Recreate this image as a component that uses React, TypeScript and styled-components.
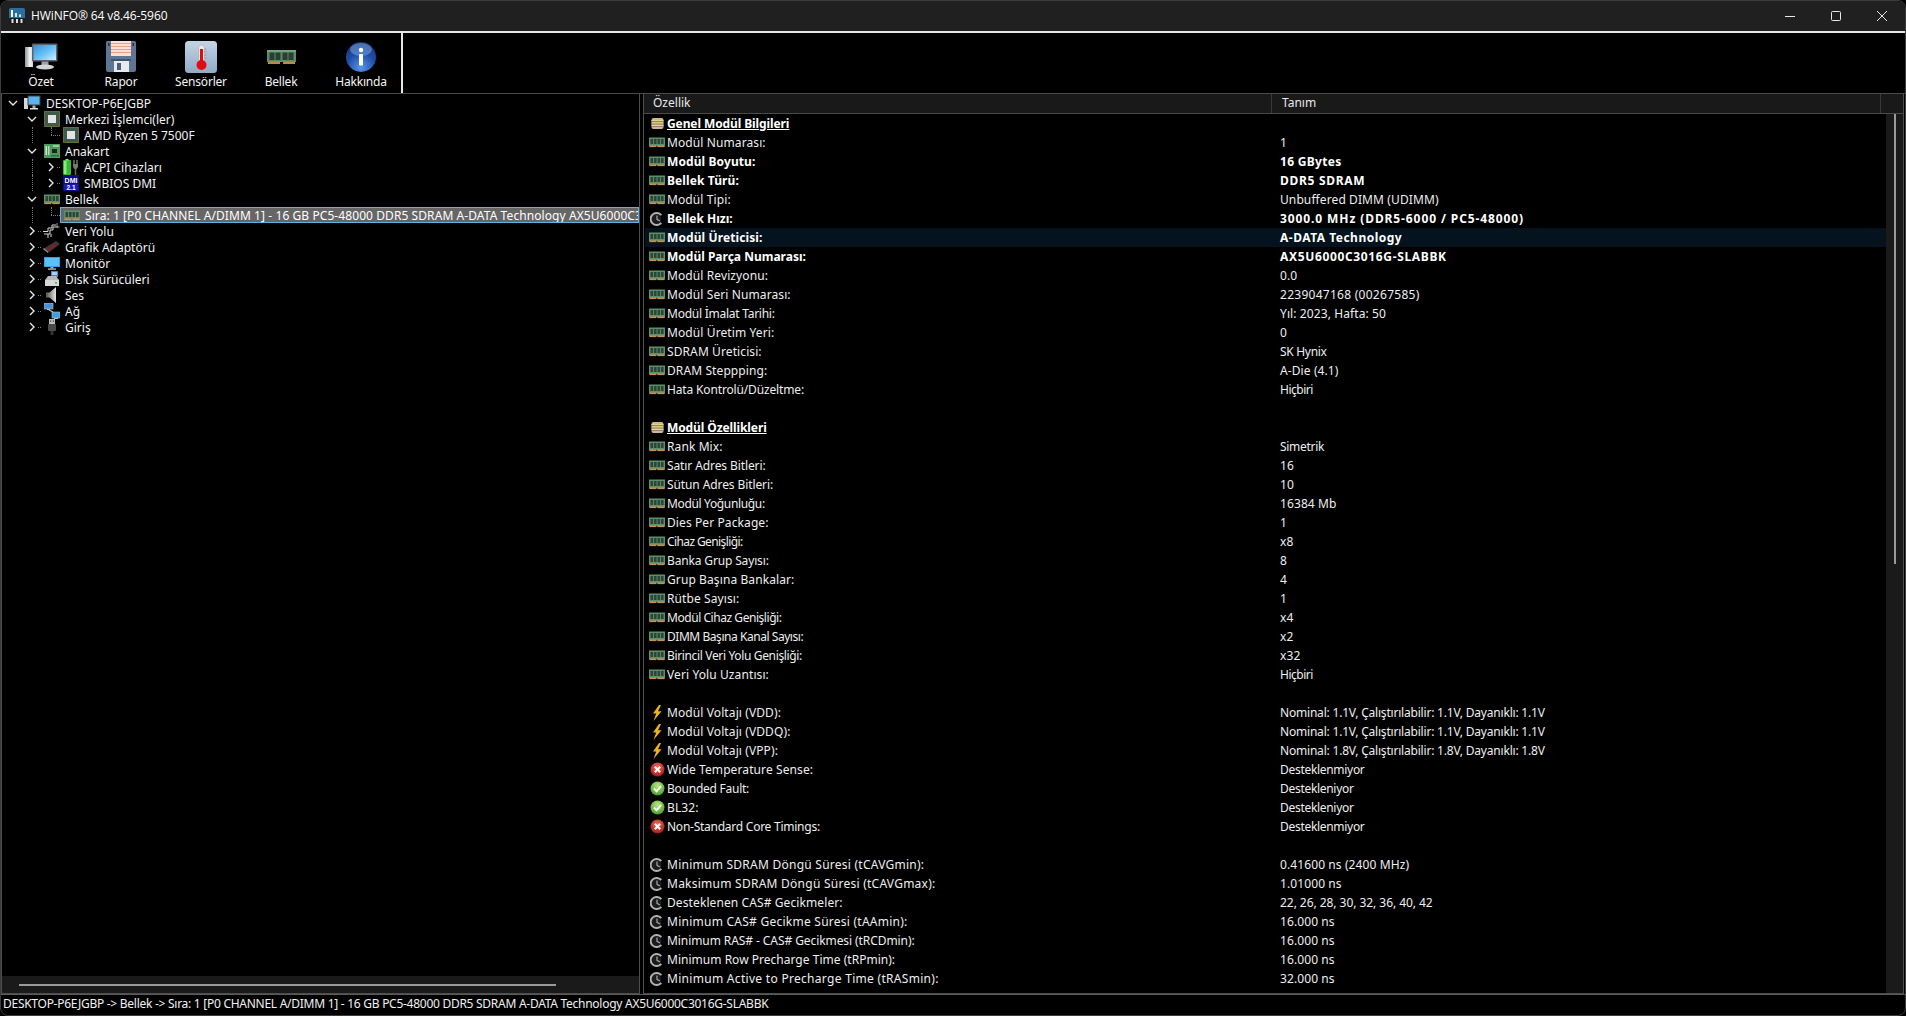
import styled, { createGlobalStyle } from "styled-components";

const GlobalStyle = createGlobalStyle`
  html, body {
    margin: 0;
    padding: 0;
    background: #000;
  }
  * {
    box-sizing: border-box;
  }
`;

const Win = styled.div`
  width: 100vw;
  height: 100vh;
  display: flex;
  flex-direction: column;
  background: #000;
  border: 1px solid #3c3c3c;
  border-radius: 8px;
  overflow: hidden;
  color: #f2f2f2;
  font-family: "Noto Sans", "Liberation Sans", sans-serif;
  font-size: 12px;
  line-height: 16px;
`;

const TitleBar = styled.div`
  height: 32px;
  flex: none;
  display: flex;
  align-items: center;
  background: #202020;
  border-bottom: 2px solid #e6e6e6;
  padding-left: 8px;
`;

const TitleText = styled.span`
  margin-left: 6px;
  flex: 1;
  font-family: "Open Sans", "Noto Sans", sans-serif;
  font-size: 12px;
  letter-spacing: -0.1px;
  color: #fff;
`;

const WinButton = styled.div`
  width: 46px;
  height: 30px;
  display: flex;
  align-items: center;
  justify-content: center;
`;

const Toolbar = styled.div`
  height: 61px;
  flex: none;
  display: flex;
  border-bottom: 1px solid #4a4a4a;
`;

const ToolGroup = styled.div`
  width: 402px;
  display: flex;
  border-right: 2px solid #e6e6e6;
`;

const ToolButton = styled.div`
  width: 80px;
  display: flex;
  flex-direction: column;
  align-items: center;
  padding-top: 7px;
`;

const ToolIcon = styled.div`
  height: 33px;
  display: flex;
  align-items: center;
`;

const ToolLabel = styled.span`
  margin-top: 1px;
  font-size: 12px;
  letter-spacing: -0.2px;
  color: #f4f4f4;
`;

const Main = styled.div`
  flex: 1;
  min-height: 0;
  display: flex;
  gap: 3px;
`;

const TreePanel = styled.div`
  width: 639px;
  flex: none;
  display: flex;
  flex-direction: column;
  border: 1px solid #4e4e4e;
  border-top: none;
`;

const TreeBody = styled.div`
  flex: 1;
  padding: 1px 0 0 1px;
  overflow: hidden;
`;

const TreeRow = styled.div`
  height: 16px;
  display: flex;
  align-items: center;
  white-space: nowrap;
`;

const Cell = styled.div<{ $line?: boolean; $elbow?: boolean; $stub?: boolean }>`
  position: relative;
  width: 19px;
  height: 16px;
  flex: none;
  display: flex;
  align-items: center;
  justify-content: center;

  &::before {
    content: ${({ $line, $elbow }) => ($line || $elbow ? '""' : "none")};
    position: absolute;
    left: 10px;
    top: 0;
    height: ${({ $elbow }) => ($elbow ? "8px" : "16px")};
    border-left: 1px dotted #7a7a7a;
  }

  &::after {
    content: ${({ $elbow, $stub }) => ($elbow || $stub ? '""' : "none")};
    position: absolute;
    left: ${({ $stub }) => ($stub ? "16px" : "10px")};
    top: 8px;
    width: ${({ $stub }) => ($stub ? "3px" : "9px")};
    border-top: 1px dotted #7a7a7a;
  }
`;

const IconSlot = styled.div`
  width: 19px;
  height: 16px;
  flex: none;
  display: flex;
  align-items: center;
  justify-content: flex-end;
`;

const TreeLabel = styled.span`
  margin-left: 5px;
  padding-top: 1px;
`;

const Selected = styled.div`
  flex: 1;
  min-width: 0;
  height: 16px;
  display: flex;
  align-items: center;
  overflow: hidden;
  background: #666;
  border: 1px solid #5cb2e6;
`;

const SelectedLabel = styled.span`
  margin-left: 5px;
  padding-top: 1px;
  letter-spacing: 0.08px;
  color: #fff;
`;

const HScroll = styled.div`
  height: 17px;
  flex: none;
  display: flex;
  align-items: center;
  padding-left: 17px;
  background: #1a1a1a;
`;

const HThumb = styled.div`
  width: 537px;
  height: 2px;
  background: #9a9a9a;
`;

const DetailPanel = styled.div`
  flex: 1;
  min-width: 0;
  margin-right: 1px;
  display: flex;
  flex-direction: column;
  border: 1px solid #4e4e4e;
  border-top: none;
`;

const Header = styled.div`
  height: 20px;
  flex: none;
  display: flex;
  background: #191919;
  border-bottom: 1px solid #4a4a4a;
`;

const HeaderCell = styled.div<{ $w: number }>`
  width: ${({ $w }) => $w}px;
  flex: none;
  padding-left: ${({ $w }) => ($w > 620 ? 9 : 10)}px;
  border-right: 1px solid #3a3a3a;
  color: #e8e8e8;
  line-height: 18px;
`;

const DetailBody = styled.div`
  flex: 1;
  min-height: 0;
  display: flex;
`;

const Rows = styled.div`
  flex: 1;
  min-width: 0;
  overflow: hidden;
`;

const VScroll = styled.div`
  width: 17px;
  flex: none;
  display: flex;
  justify-content: center;
  background: #1a1a1a;
`;

const VThumb = styled.div`
  width: 2px;
  height: 450px;
  background: #9a9a9a;
`;

const Row = styled.div<{ $hl?: boolean; $bold?: boolean }>`
  height: 19px;
  margin-left: 1px;
  display: grid;
  grid-template-columns: 627px 1fr;
  align-items: center;
  white-space: nowrap;
  background: ${({ $hl }) => ($hl ? "#04131d" : "transparent")};
  font-weight: ${({ $bold }) => ($bold ? 700 : 400)};
  color: ${({ $bold }) => ($bold ? "#fff" : "#eeeeee")};
`;

const NameCell = styled.div<{ $track?: number }>`
  display: flex;
  align-items: center;
  padding-left: 4px;
  letter-spacing: ${({ $track }) => $track ?? 0.1}px;
`;

const RowIcon = styled.div`
  width: 16px;
  height: 16px;
  flex: none;
  display: flex;
  align-items: center;
  justify-content: center;
  margin-right: 2px;
`;

const SectionTitle = styled.span`
  font-weight: 700;
  color: #fff;
  letter-spacing: -0.1px;
  text-decoration: underline;
`;

const ValueCell = styled.div<{ $track?: number }>`
  padding-left: 8px;
  letter-spacing: ${({ $track }) => $track ?? 0.1}px;
`;

const StatusBar = styled.div`
  height: 21px;
  flex: none;
  display: flex;
  align-items: center;
  padding: 0 0 3px 2px;
  border-top: 1px solid #5a5a5a;
  color: #f0f0f0;
  letter-spacing: -0.27px;
  white-space: nowrap;
`;

const Chevron = ({ open }: { open?: boolean }) => (
  <svg width="10" height="10" viewBox="0 0 10 10" fill="none" stroke="#e6e6e6" strokeWidth="1.4">
    <path d={open ? "M1 3l4 4 4-4" : "M3 1l4 4-4 4"} />
  </svg>
);

const RamSmall = () => (
  <svg width="16" height="11" viewBox="0 0 16 11">
    <rect x="0" y="0.5" width="16" height="9" fill="#5f8e6d" />
    <rect x="1.5" y="2" width="2.6" height="5" fill="#2c4636" />
    <rect x="5" y="2" width="2.6" height="5" fill="#2c4636" />
    <rect x="8.5" y="2" width="2.6" height="5" fill="#2c4636" />
    <rect x="12" y="2" width="2.6" height="5" fill="#2c4636" />
    <rect x="0.5" y="8.5" width="6.5" height="1.6" fill="#c8904a" />
    <rect x="8.5" y="8.5" width="7" height="1.6" fill="#c8904a" />
  </svg>
);

const ClockIcon = () => (
  <svg width="14" height="14" viewBox="0 0 14 14" fill="none">
    <circle cx="6.5" cy="7" r="5" fill="#1c1c1c" />
    <path d="M11.3 3.2A6 6 0 1 0 11.3 10.8" stroke="#b0b0b0" strokeWidth="2" />
    <path d="M7 3.5V7.3L10 9" stroke="#a0a0a0" strokeWidth="1.3" />
  </svg>
);

const BoltIcon = () => (
  <svg width="12" height="16" viewBox="0 0 12 16">
    <path d="M8 0 2 8.5h3.2L2.5 16 10.5 6.2H7L10 0z" fill="#eeb31c" />
  </svg>
);

const ErrIcon = () => (
  <svg width="15" height="15" viewBox="0 0 15 15">
    <defs>
      <radialGradient id="errG" cx="50%" cy="35%" r="70%">
        <stop offset="0%" stopColor="#f2705f" />
        <stop offset="100%" stopColor="#a80f10" />
      </radialGradient>
    </defs>
    <circle cx="7.5" cy="7.5" r="7" fill="url(#errG)" />
    <path d="M4.8 4.8l5.4 5.4M10.2 4.8l-5.4 5.4" stroke="#fff" strokeWidth="2" />
  </svg>
);

const OkIcon = () => (
  <svg width="15" height="15" viewBox="0 0 15 15">
    <defs>
      <radialGradient id="okG" cx="50%" cy="30%" r="75%">
        <stop offset="0%" stopColor="#b8e878" />
        <stop offset="100%" stopColor="#3d9a26" />
      </radialGradient>
    </defs>
    <circle cx="7.5" cy="7.5" r="7" fill="url(#okG)" />
    <path d="M4 7.5l2.6 2.8L11 5" fill="none" stroke="#fff" strokeWidth="2" />
  </svg>
);

const StackIcon = () => (
  <svg width="13" height="11" viewBox="0 0 13 11">
    <rect x="0.5" y="0" width="12" height="11" rx="2" fill="#c9b98c" />
    <path d="M0.5 2.5h12M0.5 5h12M0.5 7.5h12" stroke="#e8d48a" strokeWidth="1" />
    <path d="M0.5 3.5h12M0.5 6h12M0.5 8.5h12" stroke="#7a6f52" strokeWidth="0.7" />
  </svg>
);

const ChipIcon = () => (
  <svg width="16" height="16" viewBox="0 0 16 16">
    <rect x="0.5" y="0.5" width="15" height="15" fill="#3e5a4a" stroke="#c9a13c" strokeDasharray="1 1" />
    <rect x="4" y="4" width="8" height="8" fill="#e4e4e4" />
  </svg>
);

const BoardIcon = () => (
  <svg width="16" height="14" viewBox="0 0 16 14">
    <rect x="0" y="0" width="16" height="14" fill="#4d9a5e" />
    <rect x="1.5" y="2" width="1.5" height="9" fill="#cfe7cf" />
    <rect x="4" y="2" width="1.5" height="9" fill="#b8d8b8" />
    <rect x="8" y="5" width="5" height="4" fill="#222" />
    <rect x="9" y="1" width="6" height="2" fill="#8fd08f" />
    <rect x="7" y="11" width="8" height="1.5" fill="#2f6f3f" />
  </svg>
);

const AcpiIcon = () => (
  <svg width="16" height="16" viewBox="0 0 16 16">
    <rect x="0" y="1" width="8" height="15" rx="1" fill="#35b93a" />
    <rect x="1" y="2" width="2.5" height="13" fill="#8ee87a" />
    <rect x="2.5" y="0" width="3" height="1.5" fill="#8ee87a" />
    <path d="M11 1v4M14 1v4" stroke="#aaa" strokeWidth="1" />
    <path d="M10 5h5v3l-1.5 2h-2L10 8z" fill="#777" />
    <path d="M12.5 10v6" stroke="#666" strokeWidth="1.6" />
  </svg>
);

const DmiIcon = () => (
  <svg width="16" height="16" viewBox="0 0 16 16">
    <rect width="16" height="16" fill="#0b0b8e" />
    <text x="8" y="7.5" textAnchor="middle" fontSize="7" fontWeight="700" fill="#fff" fontFamily="Liberation Sans, sans-serif">DMI</text>
    <rect x="1" y="9" width="14" height="6" fill="#1c1ca8" />
    <text x="8" y="14.5" textAnchor="middle" fontSize="6.5" fontWeight="700" fill="#fff" fontFamily="Liberation Sans, sans-serif">2.1</text>
  </svg>
);

const BusIcon = () => (
  <svg width="17" height="16" viewBox="0 0 17 16" fill="none" stroke="#d8d8d8" strokeWidth="1">
    <path d="M0 8.5h5V5h4V2h4M1 11h6V7h3V4h5M5 11v4M8 11v3" />
    <path d="M14 0v4h2.5" stroke="#9a9a9a" />
  </svg>
);

const GpuIcon = () => (
  <svg width="17" height="12" viewBox="0 0 17 12">
    <path d="M0 8 13 0l4 3L5 12z" fill="#3a3a3e" />
    <path d="M3 8 12 2.5l2 1.5L6 9.5z" fill="#7a1f28" />
    <path d="M0 8l5 4v-1.5L1 7z" fill="#8a8a8a" />
  </svg>
);

const MonitorIcon = () => (
  <svg width="16" height="13" viewBox="0 0 16 13">
    <rect width="16" height="10" fill="#2f9fe8" />
    <rect x="1" y="1" width="14" height="8" fill="#5cc0f4" />
    <rect x="6.5" y="10" width="3" height="1.5" fill="#aaa" />
    <rect x="4" y="11.5" width="8" height="1.2" fill="#cfcfcf" />
  </svg>
);

const DriveIcon = () => (
  <svg width="15" height="16" viewBox="0 0 15 16">
    <rect x="6" y="0" width="7" height="6" fill="#4a80c8" />
    <rect x="7" y="1" width="5" height="3" fill="#a8d0f0" />
    <path d="M3 5h8l3 4H0z" fill="#b8b8b8" />
    <rect x="0" y="9" width="14" height="6" fill="#d8d8d8" />
    <rect x="10" y="11" width="2" height="1.5" fill="#2fb84a" />
  </svg>
);

const SpeakerIcon = () => (
  <svg width="14" height="16" viewBox="0 0 14 16">
    <defs>
      <linearGradient id="spkG" x1="0" x2="1" y1="0" y2="0">
        <stop offset="0%" stopColor="#555" />
        <stop offset="100%" stopColor="#e4e4e4" />
      </linearGradient>
    </defs>
    <path d="M0 5.5h3.5L10 0v16L3.5 10.5H0z" fill="url(#spkG)" />
  </svg>
);

const NetIcon = () => (
  <svg width="16" height="16" viewBox="0 0 16 16">
    <rect x="0" y="0" width="9" height="6" fill="#4a90d8" stroke="#bbb" strokeWidth="0.6" />
    <rect x="8" y="9" width="8" height="6" fill="#3ca0e0" stroke="#bbb" strokeWidth="0.6" />
    <path d="M5 7l4 2" stroke="#c8c8c8" strokeWidth="1.2" />
    <rect x="3" y="6" width="3" height="1" fill="#bbb" />
    <rect x="10" y="15" width="4" height="1" fill="#bbb" />
  </svg>
);

const UsbIcon = () => (
  <svg width="13" height="16" viewBox="0 0 13 16">
    <rect x="2" y="0" width="6" height="5" fill="#bdbdbd" />
    <rect x="3" y="1.5" width="1.2" height="1.2" fill="#333" />
    <rect x="5.8" y="1.5" width="1.2" height="1.2" fill="#333" />
    <rect x="1" y="5" width="8" height="7" rx="1" fill="#4a4a4a" />
    <rect x="3.5" y="12" width="3" height="4" fill="#333" />
  </svg>
);

const DesktopSmall = () => (
  <svg width="17" height="16" viewBox="0 0 17 16">
    <rect x="0" y="3" width="4" height="11" fill="#d8d8d8" />
    <rect x="3.5" y="0.5" width="13" height="10" fill="#3a3f46" />
    <rect x="4.5" y="1.5" width="11" height="8" fill="#5ab4ee" />
    <rect x="8.5" y="10.5" width="3" height="2.5" fill="#aaa" />
    <rect x="6" y="13" width="8" height="1.5" fill="#ddd" />
  </svg>
);

const BigComputer = () => (
  <svg width="33" height="27" viewBox="0 0 33 27">
    <defs>
      <linearGradient id="scrG" x1="0" y1="0" x2="1" y2="1">
        <stop offset="0%" stopColor="#2f8fe0" />
        <stop offset="55%" stopColor="#6cc4f6" />
        <stop offset="100%" stopColor="#d4eefc" />
      </linearGradient>
      <linearGradient id="towG" x1="0" y1="0" x2="1" y2="0">
        <stop offset="0%" stopColor="#8f9499" />
        <stop offset="60%" stopColor="#f4f4f4" />
        <stop offset="100%" stopColor="#cfd2d4" />
      </linearGradient>
    </defs>
    <rect x="0" y="4" width="8" height="20" fill="url(#towG)" />
    <rect x="7" y="0.5" width="25.5" height="18" rx="1" fill="#59636e" />
    <rect x="8.5" y="2" width="22.5" height="15" fill="url(#scrG)" />
    <rect x="16.5" y="18.5" width="7" height="3.5" fill="#9aa0a5" />
    <ellipse cx="20" cy="24" rx="9" ry="2.4" fill="#d2d4d6" />
  </svg>
);

const BigFloppy = () => (
  <svg width="30" height="31" viewBox="0 0 30 31">
    <path d="M0 1.5A1.5 1.5 0 0 1 1.5 0h27A1.5 1.5 0 0 1 30 1.5V29a2 2 0 0 1-2 2H2a2 2 0 0 1-2-2z" fill="#5c7694" />
    <rect x="5" y="0" width="20" height="15" fill="#fde0d4" />
    <path d="M5 2.5h20M5 5.5h20M5 8.5h20M5 11.5h20" stroke="#ee9f8c" strokeWidth="1" />
    <rect x="2" y="2" width="1.6" height="3" fill="#26303c" />
    <rect x="26.5" y="2" width="1.6" height="3" fill="#26303c" />
    <rect x="8" y="20" width="15" height="11" fill="#e8eaec" />
    <rect x="11" y="22" width="4" height="7" fill="#4a6078" />
    <rect x="5" y="18" width="20" height="2" fill="#3f5670" />
  </svg>
);

const BigThermo = () => (
  <svg width="32" height="32" viewBox="0 0 32 32">
    <defs>
      <linearGradient id="thmBg" x1="0" y1="0" x2="0" y2="1">
        <stop offset="0%" stopColor="#c4d4e4" />
        <stop offset="100%" stopColor="#8eacc6" />
      </linearGradient>
    </defs>
    <rect width="32" height="32" rx="3.5" fill="url(#thmBg)" />
    <rect x="13.5" y="4" width="6" height="20" rx="3" fill="#f0e6e6" stroke="#a8a8b0" strokeWidth="0.6" />
    <rect x="15" y="8" width="3" height="15" fill="#dc0c14" />
    <circle cx="16.5" cy="24" r="5" fill="#e50a12" />
    <path d="M19.5 8h2M19.5 11h2M19.5 14h2M19.5 17h2" stroke="#7d8a98" strokeWidth="0.7" />
  </svg>
);

const BigRam = () => (
  <svg width="29" height="16" viewBox="0 0 29 16">
    <rect x="0" y="1" width="29" height="12" fill="#5a8c6a" />
    <path d="M0 2h29" stroke="#8ab89a" strokeWidth="1" />
    <rect x="2.5" y="3.5" width="5" height="7.5" fill="#2a3e32" />
    <rect x="8.5" y="3.5" width="5" height="7.5" fill="#2a3e32" />
    <rect x="15.5" y="3.5" width="5" height="7.5" fill="#2a3e32" />
    <rect x="21.5" y="3.5" width="5" height="7.5" fill="#2a3e32" />
    <rect x="1" y="12.5" width="12" height="2.5" fill="#b78b42" />
    <rect x="16" y="12.5" width="12" height="2.5" fill="#b78b42" />
  </svg>
);

const BigInfo = () => (
  <svg width="30" height="30" viewBox="0 0 30 30">
    <defs>
      <radialGradient id="infG" cx="50%" cy="85%" r="85%">
        <stop offset="0%" stopColor="#5a94e8" />
        <stop offset="55%" stopColor="#1f4fa8" />
        <stop offset="100%" stopColor="#123378" />
      </radialGradient>
    </defs>
    <circle cx="15" cy="15" r="15" fill="url(#infG)" />
    <ellipse cx="15" cy="7.5" rx="11" ry="6.5" fill="#8fb6ee" opacity="0.45" />
    <circle cx="15" cy="8" r="2.2" fill="#fff" />
    <rect x="13" y="12" width="4" height="11.5" rx="0.8" fill="#fff" />
  </svg>
);

const AppLogo = () => (
  <svg width="16" height="16" viewBox="0 0 16 16">
    <rect width="16" height="16" rx="1.5" fill="#2a6f9e" />
    <rect y="10" width="16" height="6" fill="#1c1c1c" />
    <rect x="2" y="2" width="2" height="7" fill="#fff" />
    <rect x="6" y="5" width="2" height="4" fill="#cfe6f4" />
    <rect x="10" y="6.5" width="2" height="2.5" fill="#cfe6f4" />
    <rect x="2.5" y="11" width="2" height="4" fill="#ddd" />
    <rect x="7" y="11" width="2" height="4" fill="#ddd" />
    <rect x="11.5" y="11" width="2" height="4" fill="#ddd" />
  </svg>
);

const tools = [
  { label: "Özet", icon: <BigComputer /> },
  { label: "Rapor", icon: <BigFloppy /> },
  { label: "Sensörler", icon: <BigThermo /> },
  { label: "Bellek", icon: <BigRam /> },
  { label: "Hakkında", icon: <BigInfo /> },
];

type TreeItem = {
  level: number;
  label: string;
  icon: React.ReactNode;
  open?: boolean;
  leaf?: boolean;
  selected?: boolean;
};

const treeItems: TreeItem[] = [
  { level: 0, label: "DESKTOP-P6EJGBP", icon: <DesktopSmall />, open: true },
  { level: 1, label: "Merkezi İşlemci(ler)", icon: <ChipIcon />, open: true },
  { level: 2, label: "AMD Ryzen 5 7500F", icon: <ChipIcon />, leaf: true },
  { level: 1, label: "Anakart", icon: <BoardIcon />, open: true },
  { level: 2, label: "ACPI Cihazları", icon: <AcpiIcon /> },
  { level: 2, label: "SMBIOS DMI", icon: <DmiIcon /> },
  { level: 1, label: "Bellek", icon: <RamSmall />, open: true },
  {
    level: 2,
    label: "Sıra: 1 [P0 CHANNEL A/DIMM 1] - 16 GB PC5-48000 DDR5 SDRAM A-DATA Technology AX5U6000C3016G-SLABBK",
    icon: <RamSmall />,
    leaf: true,
    selected: true,
  },
  { level: 1, label: "Veri Yolu", icon: <BusIcon /> },
  { level: 1, label: "Grafik Adaptörü", icon: <GpuIcon /> },
  { level: 1, label: "Monitör", icon: <MonitorIcon /> },
  { level: 1, label: "Disk Sürücüleri", icon: <DriveIcon /> },
  { level: 1, label: "Ses", icon: <SpeakerIcon /> },
  { level: 1, label: "Ağ", icon: <NetIcon /> },
  { level: 1, label: "Giriş", icon: <UsbIcon /> },
];

type RowKind = "ram" | "clock" | "bolt" | "err" | "ok";

// nt / vt: letter-spacing for the name / value where this font runs off from the original
type DetailRow =
  | { title: string }
  | { blank: true }
  | { kind: RowKind; name: string; value: string; bold?: boolean; hl?: boolean; nt?: number; vt?: number };

const rowIcons: Record<RowKind, React.ReactNode> = {
  ram: <RamSmall />,
  clock: <ClockIcon />,
  bolt: <BoltIcon />,
  err: <ErrIcon />,
  ok: <OkIcon />,
};

const detailRows: DetailRow[] = [
  { title: "Genel Modül Bilgileri" },
  { kind: "ram", name: "Modül Numarası:", value: "1" },
  { kind: "ram", name: "Modül Boyutu:", value: "16 GBytes", bold: true, vt: 0.3 },
  { kind: "ram", name: "Bellek Türü:", value: "DDR5 SDRAM", bold: true, vt: 0.7 },
  { kind: "ram", name: "Modül Tipi:", value: "Unbuffered DIMM (UDIMM)" },
  { kind: "clock", name: "Bellek Hızı:", value: "3000.0 MHz (DDR5-6000 / PC5-48000)", bold: true, vt: 0.9, nt: 0 },
  { kind: "ram", name: "Modül Üreticisi:", value: "A-DATA Technology", bold: true, hl: true, vt: 0.5 },
  { kind: "ram", name: "Modül Parça Numarası:", value: "AX5U6000C3016G-SLABBK", bold: true, vt: 0.65, nt: 0 },
  { kind: "ram", name: "Modül Revizyonu:", value: "0.0" },
  { kind: "ram", name: "Modül Seri Numarası:", value: "2239047168 (00267585)", vt: 0.27 },
  { kind: "ram", name: "Modül İmalat Tarihi:", value: "Yıl: 2023, Hafta: 50", nt: -0.25 },
  { kind: "ram", name: "Modül Üretim Yeri:", value: "0" },
  { kind: "ram", name: "SDRAM Üreticisi:", value: "SK Hynix", vt: -0.3 },
  { kind: "ram", name: "DRAM Steppping:", value: "A-Die (4.1)" },
  { kind: "ram", name: "Hata Kontrolü/Düzeltme:", value: "Hiçbiri", nt: -0.15, vt: -0.5 },
  { blank: true },
  { title: "Modül Özellikleri" },
  { kind: "ram", name: "Rank Mix:", value: "Simetrik", vt: -0.3 },
  { kind: "ram", name: "Satır Adres Bitleri:", value: "16", nt: -0.1 },
  { kind: "ram", name: "Sütun Adres Bitleri:", value: "10", nt: -0.1 },
  { kind: "ram", name: "Modül Yoğunluğu:", value: "16384 Mb", nt: -0.35 },
  { kind: "ram", name: "Dies Per Package:", value: "1" },
  { kind: "ram", name: "Cihaz Genişliği:", value: "x8", nt: -0.6 },
  { kind: "ram", name: "Banka Grup Sayısı:", value: "8", nt: -0.15 },
  { kind: "ram", name: "Grup Başına Bankalar:", value: "4" },
  { kind: "ram", name: "Rütbe Sayısı:", value: "1" },
  { kind: "ram", name: "Modül Cihaz Genişliği:", value: "x4", nt: -0.45 },
  { kind: "ram", name: "DIMM Başına Kanal Sayısı:", value: "x2", nt: -0.45 },
  { kind: "ram", name: "Birincil Veri Yolu Genişliği:", value: "x32", nt: -0.35 },
  { kind: "ram", name: "Veri Yolu Uzantısı:", value: "Hiçbiri", vt: -0.5 },
  { blank: true },
  { kind: "bolt", name: "Modül Voltajı (VDD):", value: "Nominal: 1.1V, Çalıştırılabilir: 1.1V, Dayanıklı: 1.1V", vt: -0.2 },
  { kind: "bolt", name: "Modül Voltajı (VDDQ):", value: "Nominal: 1.1V, Çalıştırılabilir: 1.1V, Dayanıklı: 1.1V", vt: -0.2 },
  { kind: "bolt", name: "Modül Voltajı (VPP):", value: "Nominal: 1.8V, Çalıştırılabilir: 1.8V, Dayanıklı: 1.8V", vt: -0.2 },
  { kind: "err", name: "Wide Temperature Sense:", value: "Desteklenmiyor", vt: -0.3 },
  { kind: "ok", name: "Bounded Fault:", value: "Destekleniyor", nt: -0.25, vt: -0.3 },
  { kind: "ok", name: "BL32:", value: "Destekleniyor", vt: -0.3 },
  { kind: "err", name: "Non-Standard Core Timings:", value: "Desteklenmiyor", nt: -0.25, vt: -0.3 },
  { blank: true },
  { kind: "clock", name: "Minimum SDRAM Döngü Süresi (tCAVGmin):", value: "0.41600 ns (2400 MHz)", nt: 0.25 },
  { kind: "clock", name: "Maksimum SDRAM Döngü Süresi (tCAVGmax):", value: "1.01000 ns", nt: 0.25 },
  { kind: "clock", name: "Desteklenen CAS# Gecikmeler:", value: "22, 26, 28, 30, 32, 36, 40, 42", vt: -0.05 },
  { kind: "clock", name: "Minimum CAS# Gecikme Süresi (tAAmin):", value: "16.000 ns", nt: 0.25 },
  { kind: "clock", name: "Minimum RAS# - CAS# Gecikmesi (tRCDmin):", value: "16.000 ns", nt: -0.08 },
  { kind: "clock", name: "Minimum Row Precharge Time (tRPmin):", value: "16.000 ns", nt: 0.02 },
  { kind: "clock", name: "Minimum Active to Precharge Time (tRASmin):", value: "32.000 ns", nt: 0.3 },
];

function TreeLine({ item }: { item: TreeItem }) {
  const expander = item.leaf ? (
    <Cell $elbow />
  ) : (
    <Cell $stub={item.level > 0 && !item.open}>
      <Chevron open={item.open} />
    </Cell>
  );
  return (
    <TreeRow>
      {item.level >= 1 && <Cell />}
      {item.level === 2 && <Cell $line />}
      {expander}
      {item.selected ? (
        <Selected>
          <IconSlot>{item.icon}</IconSlot>
          <SelectedLabel>{item.label}</SelectedLabel>
        </Selected>
      ) : (
        <>
          <IconSlot>{item.icon}</IconSlot>
          <TreeLabel>{item.label}</TreeLabel>
        </>
      )}
    </TreeRow>
  );
}

function DetailLine({ row }: { row: DetailRow }) {
  if ("blank" in row) return <Row />;
  if ("title" in row) {
    return (
      <Row>
        <NameCell>
          <RowIcon>
            <StackIcon />
          </RowIcon>
          <SectionTitle>{row.title}</SectionTitle>
        </NameCell>
      </Row>
    );
  }
  return (
    <Row $bold={row.bold} $hl={row.hl}>
      <NameCell $track={row.nt}>
        <RowIcon>{rowIcons[row.kind]}</RowIcon>
        {row.name}
      </NameCell>
      <ValueCell $track={row.vt}>{row.value}</ValueCell>
    </Row>
  );
}

export default function App() {
  return (
    <>
      <GlobalStyle />
      <Win>
        <TitleBar>
          <AppLogo />
          <TitleText>HWiNFO® 64 v8.46-5960</TitleText>
          <WinButton>
            <svg width="10" height="10" viewBox="0 0 10 10" stroke="#e8e8e8" fill="none">
              <path d="M0 5.5h10" />
            </svg>
          </WinButton>
          <WinButton>
            <svg width="10" height="10" viewBox="0 0 10 10" stroke="#e8e8e8" fill="none">
              <rect x="0.5" y="0.5" width="9" height="9" rx="1" />
            </svg>
          </WinButton>
          <WinButton>
            <svg width="10" height="10" viewBox="0 0 10 10" stroke="#e8e8e8" fill="none">
              <path d="M0 0l10 10M10 0 0 10" />
            </svg>
          </WinButton>
        </TitleBar>
        <Toolbar>
          <ToolGroup>
            {tools.map((t) => (
              <ToolButton key={t.label}>
                <ToolIcon>{t.icon}</ToolIcon>
                <ToolLabel>{t.label}</ToolLabel>
              </ToolButton>
            ))}
          </ToolGroup>
        </Toolbar>
        <Main>
          <TreePanel>
            <TreeBody>
              {treeItems.map((item) => (
                <TreeLine key={item.label} item={item} />
              ))}
            </TreeBody>
            <HScroll>
              <HThumb />
            </HScroll>
          </TreePanel>
          <DetailPanel>
            <Header>
              <HeaderCell $w={628}>Özellik</HeaderCell>
              <HeaderCell $w={609}>Tanım</HeaderCell>
            </Header>
            <DetailBody>
              <Rows>
                {detailRows.map((row, i) => (
                  <DetailLine key={i} row={row} />
                ))}
              </Rows>
              <VScroll>
                <VThumb />
              </VScroll>
            </DetailBody>
          </DetailPanel>
        </Main>
        <StatusBar>
          DESKTOP-P6EJGBP -&gt; Bellek -&gt; Sıra: 1 [P0 CHANNEL A/DIMM 1] - 16 GB PC5-48000 DDR5 SDRAM A-DATA Technology AX5U6000C3016G-SLABBK
        </StatusBar>
      </Win>
    </>
  );
}
